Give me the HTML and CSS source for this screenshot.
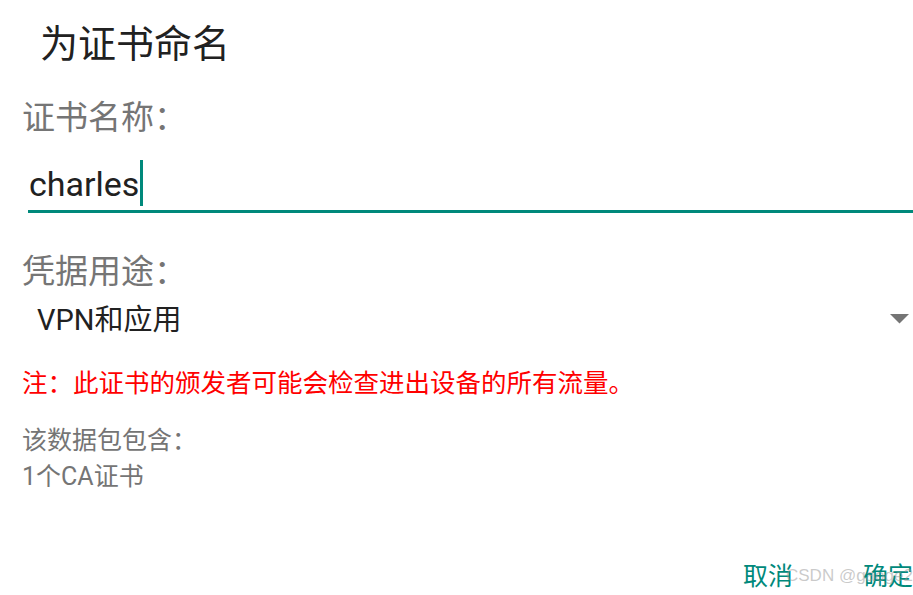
FILE: index.html
```html
<!DOCTYPE html>
<html lang="zh-CN">
<head>
<meta charset="utf-8">
<title>为证书命名</title>
<link rel="stylesheet" href="styles.css">
</head>
<body>
<div class="dialog">
  <div class="title">为证书命名</div>
  <div class="label label-name">证书名称：</div>
  <div class="input"><span class="input-text">charles</span><span class="cursor"></span></div>
  <div class="label label-usage">凭据用途：</div>
  <div class="spinner">
    <span class="spinner-text">VPN和应用</span>
    <svg class="spinner-arrow" width="19" height="10" viewBox="0 0 19 10"><path d="M0 0 H19 L9.5 9.5 Z" fill="#757575"/></svg>
  </div>
  <div class="warning">注：此证书的颁发者可能会检查进出设备的所有流量。</div>
  <div class="info">
    <div>该数据包包含：</div>
    <div>1个CA证书</div>
  </div>
  <div class="buttons">
    <span class="btn">取消</span>
    <span class="btn">确定</span>
    <span class="watermark">CSDN @gaoge2x</span>
  </div>
</div>
</body>
</html>
```
FILE: styles.css
```css
html, body {
  margin: 0;
  padding: 0;
  background: #ffffff;
}
body {
  width: 913px;
  height: 595px;
  overflow: hidden;
  font-family: Roboto, "Noto Sans CJK SC", sans-serif;
}
.dialog {
  display: flex;
  flex-direction: column;
  padding-left: 22px;
}
.title {
  margin-top: 22px;
  margin-left: 18px;
  font-size: 38px;
  line-height: 44px;
  color: #212121;
}
.label {
  font-size: 33px;
  line-height: 40px;
  color: #757575;
}
.label-name {
  margin-top: 32px;
}
.input {
  margin-top: 22px;
  margin-left: 6px;
  display: flex;
  align-items: center;
  height: 46px;
  padding-bottom: 4px;
  border-bottom: 3px solid #00897b;
}
.input-text {
  font-size: 34px;
  line-height: 46px;
  color: #212121;
  margin-top: 2px;
  margin-left: 1px;
}
.cursor {
  display: inline-block;
  width: 3px;
  height: 46px;
  margin-left: 1px;
  background: #00897b;
}
.label-usage {
  margin-top: 39px;
}
.spinner {
  margin-top: 10px;
  display: flex;
  align-items: center;
  justify-content: space-between;
  padding-left: 15px;
  padding-right: 4px;
  height: 36px;
}
.spinner-text {
  font-size: 29px;
  line-height: 36px;
  color: #212121;
}
.spinner-arrow {
  display: block;
  margin-top: -3px;
}
.warning {
  margin-top: 28px;
  font-size: 25.5px;
  line-height: 34px;
  color: #ff0000;
}
.info {
  margin-top: 23px;
  font-size: 25px;
  line-height: 36px;
  color: #757575;
}
.buttons {
  position: relative;
  margin-top: 65px;
  display: flex;
  justify-content: flex-end;
  gap: 70px;
}
.btn {
  font-size: 25px;
  line-height: 34px;
  color: #00897b;
  position: relative;
  z-index: 1;
}
.watermark {
  position: absolute;
  left: 764px;
  top: 6px;
  font-family: "Liberation Sans", Arial, sans-serif;
  font-size: 17px;
  line-height: 20px;
  color: rgba(150, 150, 150, 0.5);
  z-index: 2;
  white-space: nowrap;
}
```
